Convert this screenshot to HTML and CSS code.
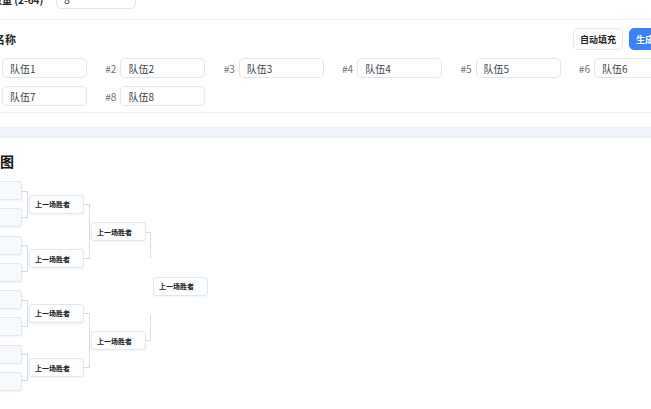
FILE: index.html
```html
<!DOCTYPE html>
<html lang="zh-CN">

<head>
    <meta charset="UTF-8">
    <meta name="viewport" content="width=device-width, initial-scale=1.0">
    <title>对阵图生成器</title>
    <link rel="stylesheet" href="styles.css">
</head>

<body>

    <div class="page">
        <!-- 设置与队伍 -->
        <div class="card">
            <div class="section">
                <div class="setting-row">
                    <label class="setting-label" for="teamCount">队伍数量 (2-64)</label>
                    <input class="setting-input" id="teamCount" type="text" value="8">
                </div>
            </div>

            <div class="section">
                <div class="section-head">
                    <h2>队伍名称</h2>
                    <div class="actions">
                        <button class="btn">自动填充</button>
                        <button class="btn btn-primary">生成对阵</button>
                    </div>
                </div>
                <div class="team-grid">
                    <div class="team"><span>#1</span><input type="text" value="队伍1"></div>
                    <div class="team"><span>#2</span><input type="text" value="队伍2"></div>
                    <div class="team"><span>#3</span><input type="text" value="队伍3"></div>
                    <div class="team"><span>#4</span><input type="text" value="队伍4"></div>
                    <div class="team"><span>#5</span><input type="text" value="队伍5"></div>
                    <div class="team"><span>#6</span><input type="text" value="队伍6"></div>
                    <div class="team"><span>#7</span><input type="text" value="队伍7"></div>
                    <div class="team"><span>#8</span><input type="text" value="队伍8"></div>
                </div>
            </div>
        </div>

        <!-- 对阵图 -->
        <div class="card card-bracket">
            <h1>对阵图</h1>
            <div class="bracket">
                <div class="round round-1">
                    <div class="match">队伍1</div>
                    <div class="match">队伍8</div>
                    <div class="match">队伍4</div>
                    <div class="match">队伍5</div>
                    <div class="match">队伍2</div>
                    <div class="match">队伍7</div>
                    <div class="match">队伍3</div>
                    <div class="match">队伍6</div>
                </div>
                <div class="round round-2">
                    <div class="match">上一场胜者</div>
                    <div class="match">上一场胜者</div>
                    <div class="match">上一场胜者</div>
                    <div class="match">上一场胜者</div>
                </div>
                <div class="round round-3">
                    <div class="match">上一场胜者</div>
                    <div class="match">上一场胜者</div>
                </div>
                <div class="round round-final">
                    <div class="match">上一场胜者</div>
                </div>
            </div>
        </div>
    </div>

</body>

</html>
```

FILE: styles.css
```css
/* Reset básico */
* {
    margin: 0;
    padding: 0;
    box-sizing: border-box;
    font-family: "Noto Sans CJK SC", "Noto Sans", sans-serif;
}

html, body {
    overflow: hidden;
    background: #eff2f6;
}

.page {
    width: 739px;
    margin: -27px 0 0 -44px;
}

/* Cartões */
.card {
    background: #fff;
    padding: 16px 16px 14px;
}

.card-bracket {
    margin-top: 11px;
    padding-top: 15px;
    padding-bottom: 40px;
}

.section {
    border-bottom: 1px solid #eef0f3;
    padding-bottom: 10px;
}

.section + .section {
    padding-top: 8px;
    padding-bottom: 6px;
}

/* Quantidade */
.setting-row {
    display: flex;
    align-items: center;
    gap: 13px;
}

.setting-label {
    font-size: 10px;
    font-weight: 700;
    color: #222;
}

.setting-input {
    width: 80px;
    height: 20px;
    border: 1px solid #e3e6eb;
    border-radius: 5px;
    padding: 0 7px;
    font-size: 10px;
    color: #333;
}

/* Cabeçalho da seção */
.section-head {
    display: flex;
    align-items: center;
    justify-content: space-between;
    margin-bottom: 8px;
}

h2 {
    font-size: 11px;
    font-weight: 700;
    color: #222;
}

.actions {
    display: flex;
    gap: 6px;
}

.btn {
    width: 50px;
    height: 22px;
    border: 1px solid #e5e7eb;
    border-radius: 5px;
    background: #fff;
    font-size: 9px;
    font-weight: 700;
    color: #222;
}

.btn-primary {
    background: #3b82f6;
    border-color: #3b82f6;
    color: #fff;
}

/* Nomes das equipes */
.team-grid {
    display: grid;
    grid-template-columns: repeat(6, 115px);
    column-gap: 3.4px;
    row-gap: 8px;
}

.team {
    display: flex;
    align-items: center;
}

.team span {
    width: 26px;
    margin-right: 4px;
    text-align: right;
    font-size: 10px;
    color: #6b7280;
}

.team input {
    width: 85px;
    height: 20px;
    border: 1px solid #e3e6eb;
    border-radius: 5px;
    padding: 0 7px;
    font-size: 10px;
    color: #3a3f47;
}

/* Chaveamento */
h1 {
    font-size: 14px;
    line-height: 16px;
    font-weight: 700;
    color: #111;
    margin-bottom: 8px;
}

.bracket {
    display: flex;
    gap: 7px;
    height: 218px;
    margin-left: -5px;
}

.round {
    width: 55px;
    display: flex;
    flex-direction: column;
    justify-content: space-around;
}

.match {
    position: relative;
    height: 19px;
    display: flex;
    align-items: center;
    padding-left: 5px;
    background: #fbfdff;
    border: 1px solid #e1e8f0;
    border-radius: 3px;
    box-shadow: 0 1px 2px rgba(15, 40, 80, 0.05);
    font-size: 7px;
    font-weight: 700;
    color: #222;
    white-space: nowrap;
}

.round-1 .match {
    background: #f7fafd;
}

/* Linhas de ligação */
.match::after {
    content: "";
    position: absolute;
    left: 100%;
    width: 6px;
    border-right: 1px solid #d3dbe5;
}

.match:nth-child(odd)::after {
    top: 50%;
    border-top: 1px solid #d3dbe5;
}

.match:nth-child(even)::after {
    bottom: 50%;
    border-bottom: 1px solid #d3dbe5;
}

.round-1 .match::after {
    height: 14px;
}

.round-2 .match::after {
    height: 27px;
}

.round-3 .match::after {
    height: 25px;
    width: 5px;
}

.round-final .match::after {
    display: none;
}
```
